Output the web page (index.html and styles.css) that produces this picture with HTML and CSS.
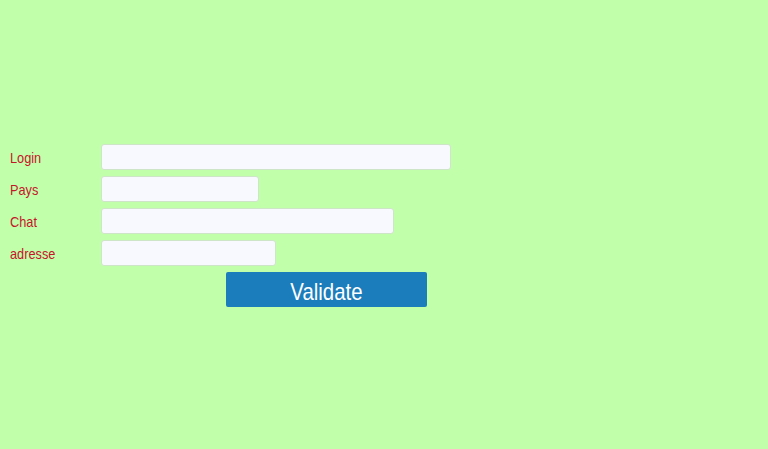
FILE: index.html
```html
<!DOCTYPE html>
<html lang="fr">
<head>
<meta charset="utf-8">
<title>Formulaire</title>
<link rel="stylesheet" href="styles.css">
</head>
<body>
<form class="form">
  <label class="label" for="login"><span class="label-text">Login</span></label>
  <input class="field field-login" id="login" type="text">
  <label class="label" for="pays"><span class="label-text">Pays</span></label>
  <input class="field field-pays" id="pays" type="text">
  <label class="label" for="chat"><span class="label-text">Chat</span></label>
  <input class="field field-chat" id="chat" type="text">
  <label class="label" for="adresse"><span class="label-text">adresse</span></label>
  <input class="field field-adresse" id="adresse" type="text">
  <div class="actions">
    <button class="validate" type="button"><span class="validate-text">Validate</span></button>
  </div>
</form>
</body>
</html>
```
FILE: styles.css
```css
html, body {
  margin: 0;
  padding: 0;
  background: #c1ffaa;
  height: 100%;
}
body {
  font-family: "Liberation Sans", Arial, sans-serif;
}
.form {
  display: grid;
  grid-template-columns: 91px 1fr;
  grid-auto-rows: 26px;
  row-gap: 6px;
  padding: 144px 0 0 10px;
  align-items: center;
}
.label {
  color: #c4162a;
  font-size: 15px;
  line-height: 26px;
  padding-top: 1px;
}
.label-text {
  display: inline-block;
  transform: scaleX(0.85);
  transform-origin: left center;
}
.field {
  box-sizing: border-box;
  height: 26px;
  margin: 0;
  padding: 0 6px;
  background: #f8f8ff;
  border: 1px solid #cfe5c8;
  border-radius: 3px;
  outline: none;
}
.field-login { width: 350px; }
.field-pays { width: 158px; }
.field-chat { width: 293px; }
.field-adresse { width: 175px; }
.actions {
  grid-column: 2;
  height: 35px;
  align-self: start;
}
.validate {
  box-sizing: border-box;
  margin-left: 125px;
  width: 201px;
  height: 35px;
  background: #1b7dbc;
  color: #ffffff;
  border: none;
  border-radius: 2px;
  font-family: "Liberation Sans", Arial, sans-serif;
  font-size: 24px;
  line-height: 30px;
  padding: 5px 0 0;
  cursor: pointer;
}
.validate-text {
  display: inline-block;
  transform: scaleX(0.85);
}
```
